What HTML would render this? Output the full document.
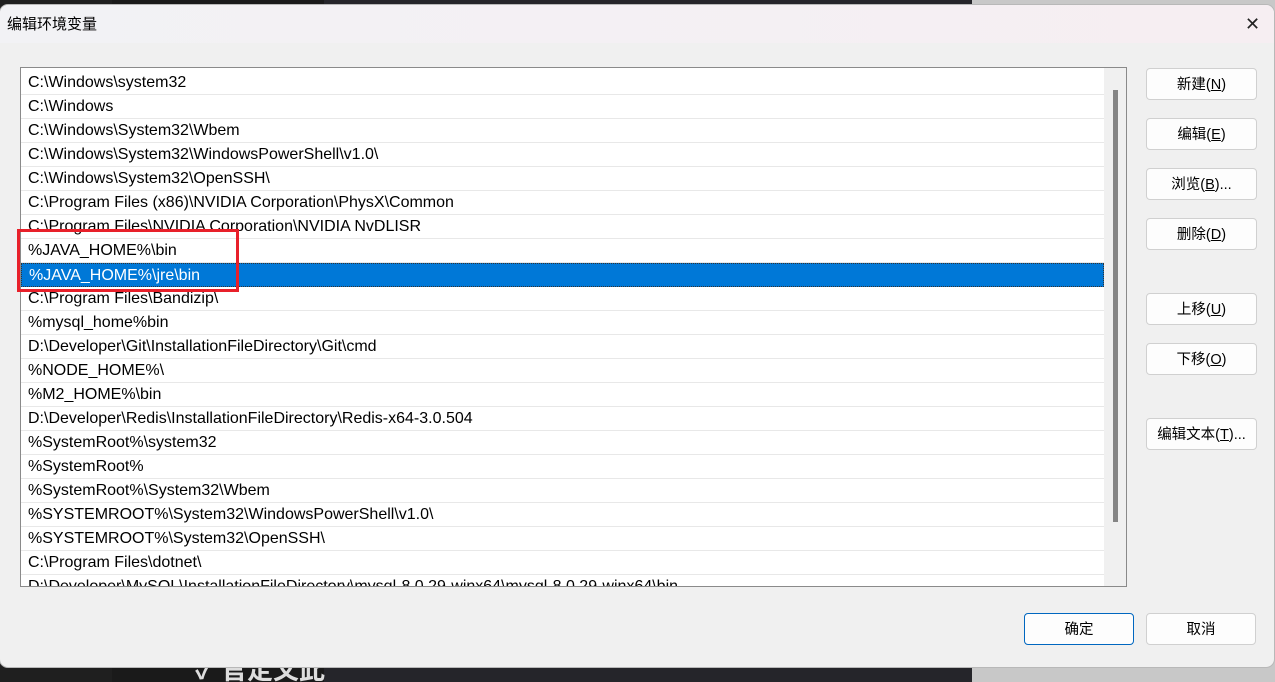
<!DOCTYPE html>
<html><head><meta charset="utf-8"><style>
*{margin:0;padding:0;box-sizing:border-box}
html,body{width:1275px;height:682px;overflow:hidden}
body{position:relative;background:#c8c8c8;font-family:"Liberation Sans","Noto Sans CJK SC",sans-serif;}
.bg{position:absolute}
#dlg{position:absolute;left:0;top:5px;width:1274px;height:662px;background:#f0f0f0;border-radius:8px;box-shadow:0 0 0 1px #b8b8b8;overflow:hidden}
#title{position:absolute;left:0;top:0;width:100%;height:38px;background:linear-gradient(90deg,#f2f2f5,#f6eef2);}
#title span{position:absolute;left:7px;top:8px;font-size:15px;color:#000}
#close{position:absolute;left:1245px;top:9px;font-size:18px;color:#222}
#list{position:absolute;left:20px;top:62px;width:1107px;height:520px;background:#fff;border:1px solid #8a8a8a;overflow:hidden}
.row{position:absolute;left:0;width:1083px;height:24px;border-bottom:1px solid #e8e8e8;font-size:16px;line-height:24px;padding-left:7px;color:#000;white-space:nowrap}
.sel{background:#0078d7;color:#fff;border:1px dotted #333}
#sb{position:absolute;left:1083px;top:0;width:22px;height:520px;background:#f0f0f0}
#thumb{position:absolute;left:9px;top:22px;width:5px;height:432px;background:#858585}
.btn{position:absolute;left:1146px;width:111px;height:32px;background:#fdfdfd;border:1px solid #d0d0d0;border-radius:4px;font-size:14.5px;text-align:center;line-height:33px;color:#000}
u{text-decoration:underline}
#red{position:absolute;left:17px;top:229px;width:222px;height:63px;border:3px solid #e8202a}
</style></head><body>
<div class="bg" style="left:0;top:0;width:112px;height:682px;background:#1f1f1f"></div>
<div class="bg" style="left:112px;top:0;width:212px;height:682px;background:#1a1a1a"></div>
<div class="bg" style="left:324px;top:0;width:648px;height:682px;background:#25252a"></div>
<div class="bg" style="left:195px;top:650px;font-size:26px;color:#ddd;font-weight:bold">✓ 官定文此</div>
<div id="dlg">
<div id="title"><span>编辑环境变量</span><div id="close">✕</div></div>
<div id="list">
<div class="row" style="top:3px">C:\Windows\system32</div>
<div class="row" style="top:27px">C:\Windows</div>
<div class="row" style="top:51px">C:\Windows\System32\Wbem</div>
<div class="row" style="top:75px">C:\Windows\System32\WindowsPowerShell\v1.0\</div>
<div class="row" style="top:99px">C:\Windows\System32\OpenSSH\</div>
<div class="row" style="top:123px">C:\Program Files (x86)\NVIDIA Corporation\PhysX\Common</div>
<div class="row" style="top:147px">C:\Program Files\NVIDIA Corporation\NVIDIA NvDLISR</div>
<div class="row" style="top:171px">%JAVA_HOME%\bin</div>
<div class="row sel" style="top:195px">%JAVA_HOME%\jre\bin</div>
<div class="row" style="top:219px">C:\Program Files\Bandizip\</div>
<div class="row" style="top:243px">%mysql_home%bin</div>
<div class="row" style="top:267px">D:\Developer\Git\InstallationFileDirectory\Git\cmd</div>
<div class="row" style="top:291px">%NODE_HOME%\</div>
<div class="row" style="top:315px">%M2_HOME%\bin</div>
<div class="row" style="top:339px">D:\Developer\Redis\InstallationFileDirectory\Redis-x64-3.0.504</div>
<div class="row" style="top:363px">%SystemRoot%\system32</div>
<div class="row" style="top:387px">%SystemRoot%</div>
<div class="row" style="top:411px">%SystemRoot%\System32\Wbem</div>
<div class="row" style="top:435px">%SYSTEMROOT%\System32\WindowsPowerShell\v1.0\</div>
<div class="row" style="top:459px">%SYSTEMROOT%\System32\OpenSSH\</div>
<div class="row" style="top:483px">C:\Program Files\dotnet\</div>
<div class="row" style="top:507px">D:\Developer\MySQL\InstallationFileDirectory\mysql-8.0.29-winx64\mysql-8.0.29-winx64\bin</div>
<div id="sb"><div id="thumb"></div></div>
</div>
<div class="btn" style="top:63px">新建(<u>N</u>)</div>
<div class="btn" style="top:113px">编辑(<u>E</u>)</div>
<div class="btn" style="top:163px">浏览(<u>B</u>)...</div>
<div class="btn" style="top:213px">删除(<u>D</u>)</div>
<div class="btn" style="top:288px">上移(<u>U</u>)</div>
<div class="btn" style="top:338px">下移(<u>O</u>)</div>
<div class="btn" style="top:413px">编辑文本(<u>T</u>)...</div>
<div class="btn" style="left:1024px;top:608px;width:110px;height:32px;border:1px solid #0067c0">确定</div>
<div class="btn" style="top:608px;width:110px;height:32px">取消</div>
</div>
<div id="red"></div>
</body></html>
